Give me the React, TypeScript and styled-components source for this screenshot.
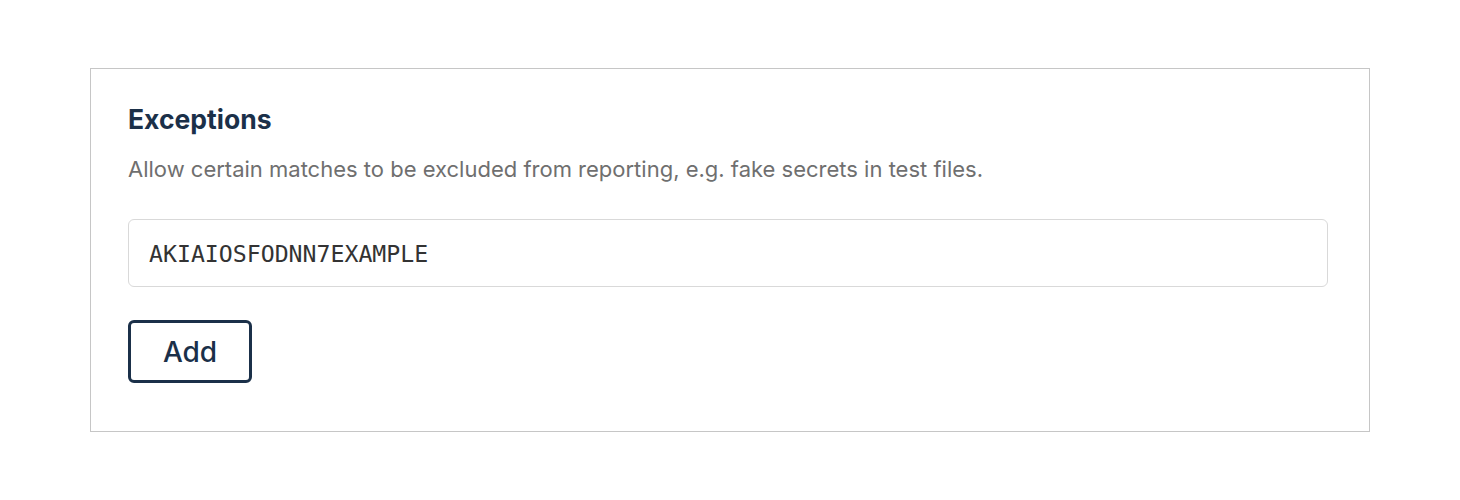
import styled, { createGlobalStyle } from "styled-components";

const GlobalStyle = createGlobalStyle`
  body {
    margin: 0;
    background: #ffffff;
    font-family: Inter, "Noto Sans", sans-serif;
  }
`;

const Page = styled.div`
  display: flex;
  justify-content: center;
  padding-top: 68px;
`;

const Card = styled.section`
  width: 1280px;
  box-sizing: border-box;
  border: 1px solid #c6c6c6;
  padding: 34px 41px 48px 37px;
  display: flex;
  flex-direction: column;
`;

const Title = styled.h2`
  margin: 0;
  font-size: 26.5px;
  font-weight: 700;
  line-height: 32px;
  color: #1b3049;
`;

const Description = styled.p`
  margin: 20px 0 0;
  font-size: 22px;
  line-height: 28px;
  color: #6f6f6f;
`;

const Input = styled.input`
  margin-top: 36px;
  width: 1200px;
  height: 68px;
  box-sizing: border-box;
  border: 1px solid #d9d9d9;
  border-radius: 6px;
  padding: 0 20px;
  font-family: "DejaVu Sans Mono", "Liberation Mono", monospace;
  font-size: 23.2px;
  color: #333333;
  outline: none;
`;

const Button = styled.button`
  margin-top: 33px;
  align-self: flex-start;
  width: 124px;
  height: 63px;
  box-sizing: border-box;
  border: 3px solid #1b3049;
  border-radius: 6px;
  background: #ffffff;
  color: #1b3049;
  font-family: Inter, sans-serif;
  font-size: 28px;
  font-weight: 500;
  cursor: pointer;
`;

function App() {
  return (
    <>
      <GlobalStyle />
      <Page>
        <Card>
          <Title>Exceptions</Title>
          <Description>
            Allow certain matches to be excluded from reporting, e.g. fake
            secrets in test files.
          </Description>
          <Input defaultValue="AKIAIOSFODNN7EXAMPLE" />
          <Button>Add</Button>
        </Card>
      </Page>
    </>
  );
}

export default App;
